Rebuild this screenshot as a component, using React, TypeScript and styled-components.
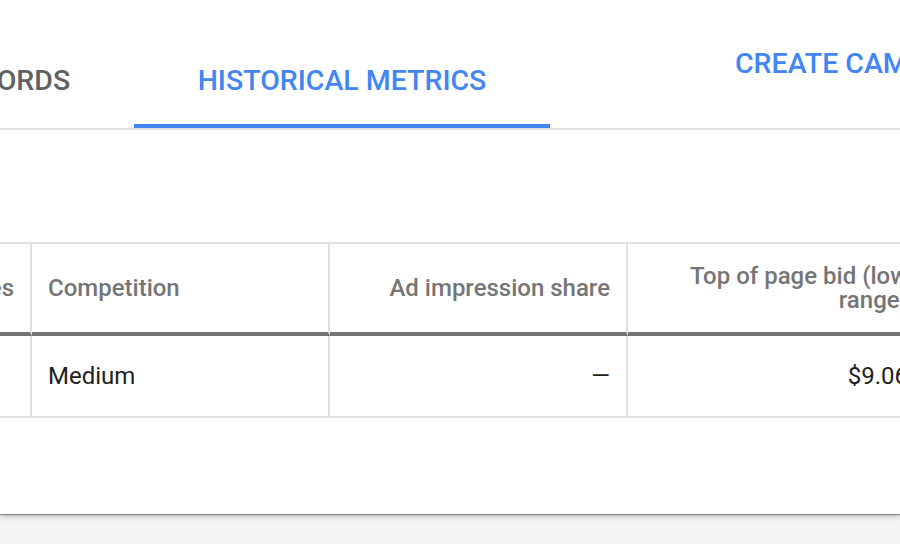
import styled, { createGlobalStyle } from 'styled-components';

const GlobalStyle = createGlobalStyle`
  html {
    overflow: hidden;
  }
  body {
    margin: 0;
    padding: 0;
    background: #f4f4f4;
    font-family: Roboto, 'Noto Sans', Arial, sans-serif;
  }
`;

const columns = [
  { header: 'Avg. monthly searches', value: '', align: 'right' },
  { header: 'Competition', value: 'Medium', align: 'left' },
  { header: 'Ad impression share', value: '—', align: 'right' },
  { header: 'Top of page bid (low range)', value: '$9.06', align: 'right' },
];

function App() {
  return (
    <Page>
      <GlobalStyle />
      <Card>
        <TabBar>
          <Tab $width={278}>KEYWORDS</Tab>
          <Tab $width={416} $active>
            HISTORICAL METRICS
          </Tab>
          <CreateButton>CREATE CAMPAIGN</CreateButton>
        </TabBar>

        <Table>
          {columns.map((c) => (
            <HeadCell key={c.header} $align={c.align}>
              {c.header}
            </HeadCell>
          ))}
          {columns.map((c) => (
            <BodyCell key={c.header + '-v'} $align={c.align}>
              {c.value}
            </BodyCell>
          ))}
        </Table>
      </Card>
    </Page>
  );
}

const Page = styled.div`
  height: 100vh;
  background: #f4f4f4;
`;

const Card = styled.div`
  height: 514px;
  background: #fff;
  box-shadow: 0 1px 1px rgba(0, 0, 0, 0.35), 0 2px 6px rgba(0, 0, 0, 0.25);
  overflow: hidden;
`;

const TabBar = styled.div`
  display: flex;
  height: 128px;
  margin-left: -144px;
  border-bottom: 2px solid #e0e0e0;
`;

const Tab = styled.div<{ $width: number; $active?: boolean }>`
  flex: none;
  box-sizing: border-box;
  width: ${(p) => p.$width}px;
  padding-top: 65px;
  text-align: center;
  font-size: 28.5px;
  line-height: 32px;
  font-weight: 500;
  color: ${(p) => (p.$active ? '#4285f4' : '#616161')};
  border-bottom: 4px solid ${(p) => (p.$active ? '#4285f4' : 'transparent')};
  white-space: nowrap;
`;

const CreateButton = styled.div`
  flex: none;
  margin-left: 185px;
  padding-top: 48px;
  font-size: 28.5px;
  line-height: 32px;
  font-weight: 500;
  color: #4285f4;
  white-space: nowrap;
`;

const Table = styled.div`
  display: grid;
  grid-template-columns: repeat(4, 298px);
  grid-template-rows: 92px 80px;
  margin-top: 112px;
  margin-left: -266px;
  width: max-content;
  border-top: 2px solid #e0e0e0;
  border-bottom: 2px solid #e0e0e0;
`;

const Cell = styled.div<{ $align: string }>`
  box-sizing: border-box;
  display: flex;
  align-items: center;
  justify-content: ${(p) => (p.$align === 'right' ? 'flex-end' : 'flex-start')};
  text-align: ${(p) => p.$align};
  padding: 0 16px;
  border-right: 2px solid #e0e0e0;
  font-size: 24px;
  line-height: 24px;
`;

const HeadCell = styled(Cell)`
  font-weight: 500;
  color: #757575;
  border-bottom: 4px solid #757575;
`;

const BodyCell = styled(Cell)`
  color: #212121;
`;

export default App;
